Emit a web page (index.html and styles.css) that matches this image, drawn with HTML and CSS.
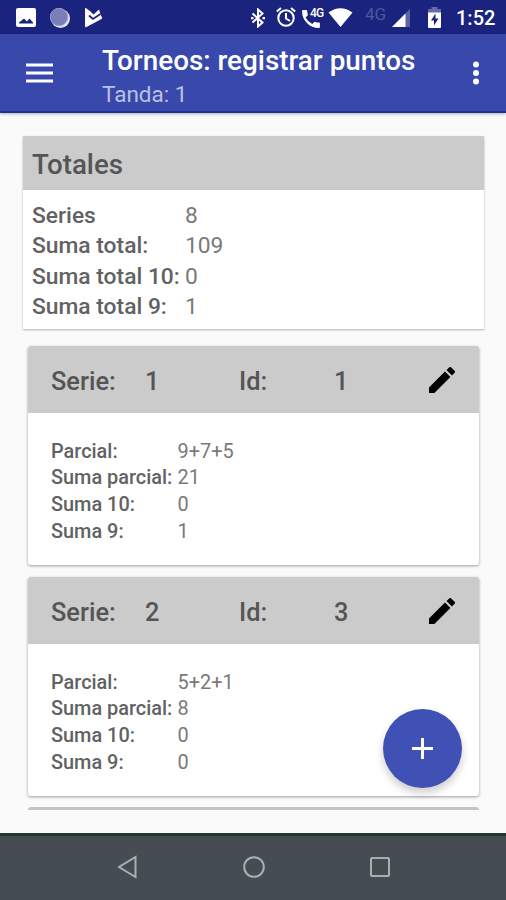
FILE: index.html
```html
<!DOCTYPE html>
<html lang="es">
<head>
<meta charset="utf-8">
<title>Torneos: registrar puntos</title>
<link rel="stylesheet" href="styles.css">
</head>
<body>
<header class="status">
  <div class="status-left">
    <svg width="20" height="20" viewBox="0 0 20 20"><path fill="#fff" fill-rule="evenodd" d="M2 0h16q2 0 2 2v15q0 2-2 2H2q-2 0-2-2V2q0-2 2-2zm1 15.500h14v-1l-3.500-4-2.500 3-3-3-5 4z"/></svg>
    <svg width="20" height="20" viewBox="0 0 20 20"><circle cx="10.500" cy="10.500" r="9.500" fill="#e2e3f2"/><circle cx="9" cy="9" r="8.700" fill="#7b7db8" stroke="#9b9ccb"/></svg>
    <svg width="19" height="20" viewBox="0 0 19 20"><path fill="#fff" d="M1 1q0-1.500 1.500-.5l4 3 3 3L15 1.500l1.500 5 1.500 3q.5 1-.5 1.500L2.500 19Q1 20 1 18z"/><path d="M5 7.500l4 3.500 7.500-5" fill="none" stroke="#1a237e" stroke-width="1.700"/></svg>
  </div>
  <div class="status-right">
    <svg class="bt" width="14" height="20" viewBox="0 0 14 20"><path d="M1.500 5.500l10 9L7 18.500v-17l4.500 4-10 9" fill="none" stroke="#fff" stroke-width="2"/><path d="M0 9h2.500v2.200H0zM11.500 9H14v2.200h-2.500z" fill="#fff"/></svg>
    <svg class="alarm" width="20" height="20" viewBox="0 0 20 20"><g fill="none" stroke="#fff" stroke-width="2"><circle cx="10" cy="11" r="7.700"/><path d="M10 6v5.500l4 2.500M.8 4.500L5 1M19.200 4.500L15 1"/></g></svg>
    <span class="call"><svg width="18" height="18" viewBox="0 0 18 18"><path fill="#fff" d="M1 0h3.200q.9 0 1 1 .1 1.700.6 3.400.2.700-.3 1.200L3.600 7.500q2.200 4.400 6.700 6.600l2-2q.5-.5 1.200-.2 1.700.5 3.400.6 1 .1 1 1V17q0 1-1 1C7.500 18 0 10.500 0 1q0-1 1-1z"/></svg><b>4G</b></span>
    <svg class="wifi" width="25" height="19" viewBox="0 0 25 19"><path fill="#fff" d="M.5 4.500Q12.500-4 24.500 4.500L12.500 19z"/></svg>
    <span class="net">4G</span>
    <svg class="signal" width="18" height="18" viewBox="0 0 18 18"><path fill="#5b62a8" d="M18 0v18H0z"/><path fill="#fff" d="M13.500 4.500V18H0z"/></svg>
    <svg class="battery" width="13" height="21" viewBox="0 0 13 21"><path fill="#646aab" d="M3.500 0h6v2H13v4H0V2h3.500z"/><path fill="#fff" d="M0 5.500h13V20q0 1-1 1H1q-1 0-1-1z"/><path fill="#1a237e" d="M7.500 6.500L3 13.500h3v5l4.500-7h-3z"/></svg>
    <span class="clock">1:52</span>
  </div>
</header>
<div class="toolbar">
  <svg class="menu" width="27" height="20" viewBox="0 0 27 20"><path d="M0 2h27M0 10h27M0 18h27" stroke="#fff" stroke-width="3.200"/></svg>
  <div class="heading"><h1>Torneos: registrar puntos</h1><p>Tanda: 1</p></div>
  <svg class="more" width="8" height="24" viewBox="0 0 8 24"><g fill="#fff"><circle cx="4" cy="3.500" r="3"/><circle cx="4" cy="12" r="3"/><circle cx="4" cy="20.500" r="3"/></g></svg>
</div>
<main class="content">
  <section class="totals">
    <h2>Totales</h2>
    <dl>
      <dt>Series</dt><dd>8</dd>
      <dt>Suma total:</dt><dd>109</dd>
      <dt>Suma total 10:</dt><dd>0</dd>
      <dt>Suma total 9:</dt><dd>1</dd>
    </dl>
  </section>
  <div class="list">
    <article class="card">
      <div class="card-head"><span>Serie:</span><span class="num">1</span><span>Id:</span><span class="num">1</span>
        <svg width="26" height="26" viewBox="3 3 18 18"><path d="M3 17.250V21h3.750L17.810 9.940l-3.750-3.750zM20.710 7.040a1 1 0 0 0 0-1.410l-2.340-2.340a1 1 0 0 0-1.410 0l-1.830 1.830 3.750 3.750z"/></svg>
      </div>
      <dl>
        <dt>Parcial:</dt><dd>9+7+5</dd>
        <dt>Suma parcial:</dt><dd>21</dd>
        <dt>Suma 10:</dt><dd>0</dd>
        <dt>Suma 9:</dt><dd>1</dd>
      </dl>
    </article>
    <article class="card">
      <div class="card-head"><span>Serie:</span><span class="num">2</span><span>Id:</span><span class="num">3</span>
        <svg width="26" height="26" viewBox="3 3 18 18"><path d="M3 17.250V21h3.750L17.810 9.940l-3.750-3.750zM20.710 7.040a1 1 0 0 0 0-1.410l-2.340-2.340a1 1 0 0 0-1.410 0l-1.830 1.830 3.750 3.750z"/></svg>
      </div>
      <dl>
        <dt>Parcial:</dt><dd>5+2+1</dd>
        <dt>Suma parcial:</dt><dd>8</dd>
        <dt>Suma 10:</dt><dd>0</dd>
        <dt>Suma 9:</dt><dd>0</dd>
      </dl>
    </article>
    <div class="card-edge"></div>
  </div>
  <div class="fab"><svg width="21" height="21" viewBox="0 0 21 21"><path d="M10.500 0v21M0 10.500h21" stroke="#fff" stroke-width="3"/></svg></div>
</main>
<nav class="navbar">
  <svg width="24" height="24" viewBox="0 0 24 24"><path d="M19.500 2v20L3 12z"/></svg>
  <svg width="24" height="24" viewBox="0 0 24 24"><circle cx="12" cy="12" r="9.800"/></svg>
  <svg width="24" height="24" viewBox="0 0 24 24"><rect x="3" y="3" width="18" height="18" rx="1"/></svg>
</nav>
</body>
</html>
```

FILE: styles.css
```css
* { box-sizing: border-box; margin: 0; }
svg { display: block; flex: none; }
body {
  height: 900px;
  display: flex;
  flex-direction: column;
  overflow: hidden;
  background: #fafafa;
  font-family: Roboto, sans-serif;
  color: #626262;
}
.status {
  height: 34px;
  flex: none;
  display: flex;
  justify-content: space-between;
  background: #1a237e;
  color: #fff;
}
.status-left { display: flex; gap: 14px; padding: 8px 0 0 16px; }
.status-right { display: flex; align-items: flex-start; padding-right: 10px; }
.bt { margin: 8px 11px 0 0; }
.alarm { margin: 7px 6px 0 0; }
.call { position: relative; margin: 10px 8px 0 0; }
.call b { position: absolute; left: 8px; top: -3px; font: 500 12px/12px Roboto, sans-serif; letter-spacing: -0.8px; }
.wifi { margin: 8px 12px 0 0; }
.net { width: 23px; margin: 5px 4px 0 0; font-size: 17px; line-height: 18px; color: #4f569f; }
.signal { margin: 9px 18px 0 0; }
.battery { margin: 7px 15px 0 0; }
.clock { width: 40px; margin-top: 7px; font-size: 20px; line-height: 23px; font-weight: 500; white-space: nowrap; }
.toolbar {
  position: relative;
  height: 79px;
  flex: none;
  display: flex;
  background: #3949ab;
  border-bottom: 2px solid #1c2f9b;
  box-shadow: 0 1px 3px rgba(0, 0, 0, .3);
  color: #fff;
}
.menu { margin: 29px 48px 0 26px; }
.heading { flex: 1; padding: 10px 0 0 1px; white-space: nowrap; }
h1 { font-size: 27.850px; line-height: 34px; font-weight: 500; }
.heading p { font-size: 22.500px; line-height: 33px; color: #bac1e4; }
.more { margin: 27px 26px 0 0; }
.content { position: relative; flex: 1; padding: 23px 22px 0 23px; }
dl { display: grid; white-space: nowrap; }
dt { font-weight: 500; }
dd { font-weight: 400; color: #797979; }
.totals { height: 193px; background: #fff; box-shadow: 0 1px 2px rgba(0, 0, 0, .3); }
h2 { height: 54px; padding-left: 9px; background: #cbcbcb; font-size: 27.700px; line-height: 58px; font-weight: 500; color: #555; }
.totals dl {
  grid-template-columns: 153px 1fr;
  grid-auto-rows: 30.400px;
  padding: 11px 9px 0;
  font-size: 22.800px;
  line-height: 30px;
}
.list { display: flex; flex-direction: column; gap: 12px; padding: 17px 5px 0; }
.card { height: 219px; border-radius: 3px; background: #fff; box-shadow: 0 1px 3px rgba(0, 0, 0, .38); overflow: hidden; }
.card-head {
  height: 67px;
  display: grid;
  grid-template-columns: 94px 94px 95px 95px 26px;
  align-items: center;
  padding-left: 23px;
  background: #cbcbcb;
  font-size: 25.400px;
  line-height: 30px;
  font-weight: 500;
  color: #555;
}
.card-head span { padding-top: 3px; }
.card dl {
  grid-template-columns: 126.500px 1fr;
  grid-auto-rows: 26.700px;
  padding: 24.500px 23px 0;
  font-size: 19.900px;
  line-height: 27px;
}
.card-edge { height: 3px; background: #c4c4c4; border-radius: 3px 3px 0 0; margin-top: -1px; }
.fab {
  position: absolute;
  right: 44px;
  bottom: 45px;
  width: 79px;
  height: 79px;
  display: grid;
  place-items: center;
  border-radius: 50%;
  background: #3f51b5;
  box-shadow: 0 5px 8px rgba(0, 0, 0, .2);
}
.navbar {
  height: 67px;
  flex: none;
  display: flex;
  justify-content: center;
  gap: 102px;
  padding: 19px 0 0 1px;
  background: #454c52;
  border-top: 3px solid #203632;
}
.navbar svg { fill: none; stroke: #aab0b2; stroke-width: 2; }
```
